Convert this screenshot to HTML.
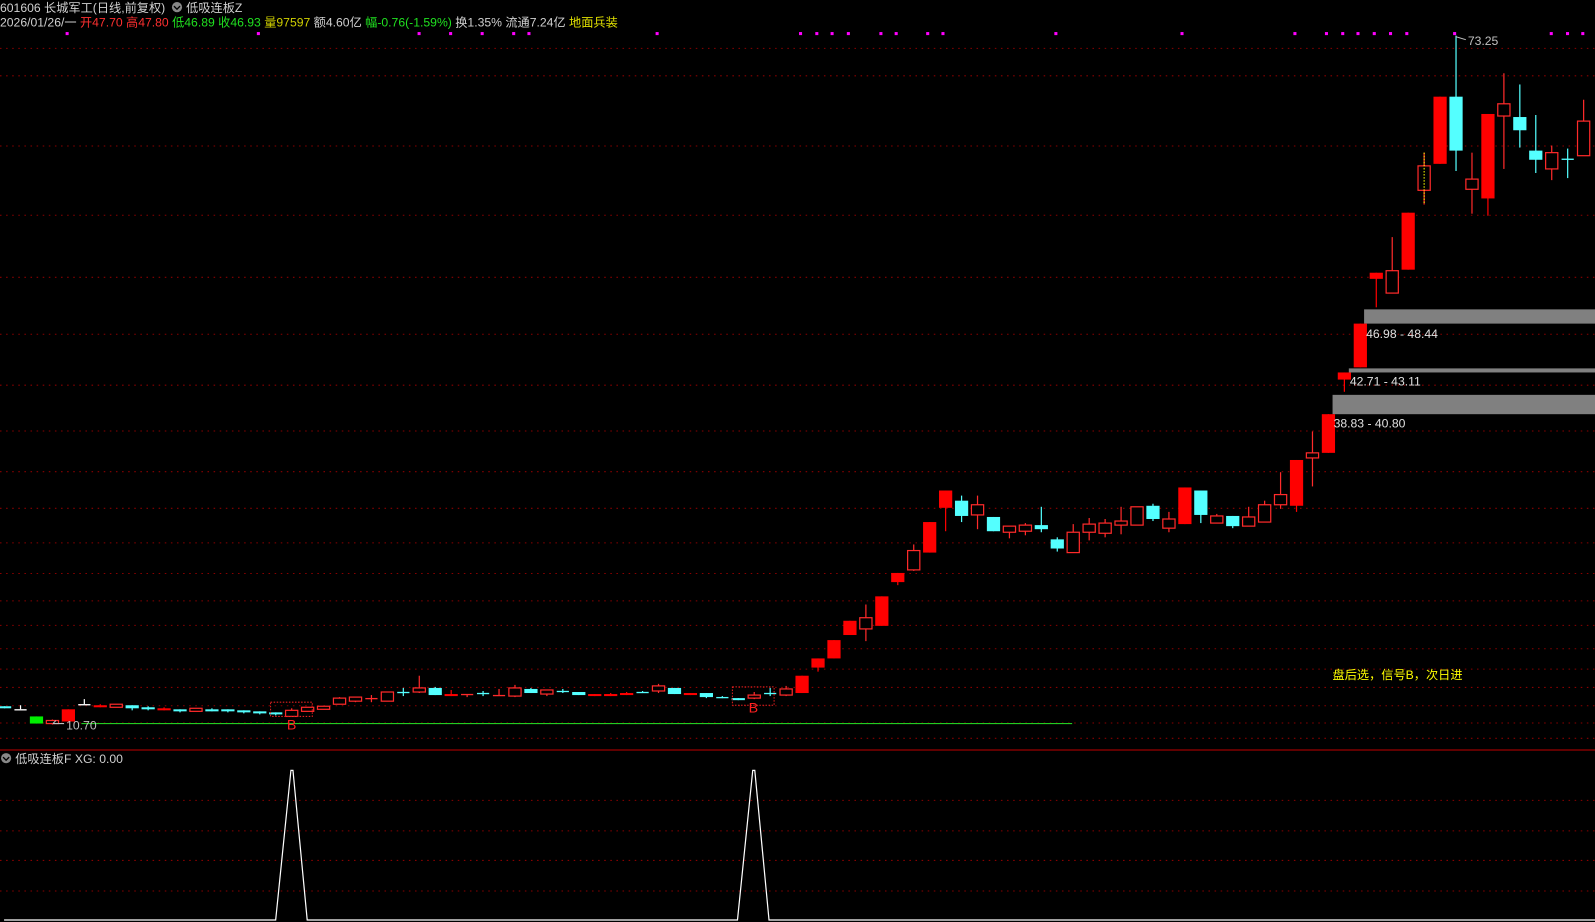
<!DOCTYPE html>
<html><head><meta charset="utf-8"><style>
html,body{margin:0;padding:0;background:#000;overflow:hidden}
svg{display:block}
text{font-family:"Liberation Sans","Noto Sans CJK SC",sans-serif}
</style></head><body>
<svg id="s" width="1595" height="922" viewBox="0 0 1568 906" preserveAspectRatio="none" xmlns="http://www.w3.org/2000/svg">
<rect width="1568" height="906" fill="#000"/>
<g id="grid"></g>
<g id="dots"></g>
<!-- gray bands -->
<rect x="1341" y="304" width="227" height="14" fill="#808080"/>
<rect x="1326" y="362" width="242" height="4" fill="#808080"/>
<rect x="1310" y="388" width="258" height="19" fill="#808080"/>
<line x1="80" y1="711" x2="1054" y2="711" stroke="#22cc22" stroke-width="1.2"/>
<g id="c"></g>
<rect x="266" y="690" width="41" height="14" fill="none" stroke="#e02020" stroke-dasharray="1.5,1.5"/>
<rect x="720" y="675" width="41" height="18" fill="none" stroke="#e02020" stroke-dasharray="1.5,1.5"/>
<text x="282" y="717" fill="#ff2020" font-size="14">B</text>
<text x="736" y="700" fill="#ff2020" font-size="14">B</text>
<text x="65" y="717" fill="#c0c0c0" font-size="12">10.70</text>
<path d="M52 711 h11 M52 711 l3 -3" stroke="#c0c0c0" fill="none"/>
<text x="1443" y="44" fill="#c0c0c0" font-size="12">73.25</text>
<path d="M1431 36 l10 3" stroke="#c0c0c0"/>
<text x="1343" y="332" fill="#e0e0e0" font-size="12">46.98 - 48.44</text>
<text x="1327" y="379" fill="#e0e0e0" font-size="12">42.71 - 43.11</text>
<text x="1311" y="420" fill="#e0e0e0" font-size="12">38.83 - 40.80</text>
<text x="1310" y="667" fill="#ffff00" font-size="12">盘后选，信号B，次日进</text>
<!-- header -->
<text x="0" y="12" fill="#d0d0d0" font-size="12">601606 长城军工(日线,前复权)</text>
<circle cx="174" cy="7" r="5" fill="#888"/><path d="M171 6 l3 3 l3 -3" stroke="#000" fill="none" stroke-width="1.3"/>
<text x="183" y="12" fill="#d0d0d0" font-size="12">低吸连板Z</text>
<text x="0" y="26" font-size="12"><tspan fill="#d0d0d0">2026/01/26/一 </tspan><tspan fill="#ff3030">开47.70 高47.80 </tspan><tspan fill="#20e020">低46.89 收46.93 </tspan><tspan fill="#d0d000">量97597 </tspan><tspan fill="#d0d0d0">额4.60亿 </tspan><tspan fill="#20e020">幅-0.76(-1.59%) </tspan><tspan fill="#d0d0d0">换1.35% 流通7.24亿 </tspan><tspan fill="#e0e000">地面兵装</tspan></text>
<!-- bottom panel -->
<line x1="0" y1="737" x2="1568" y2="737" stroke="#c00000" stroke-width="1"/>
<circle cx="6" cy="745" r="5" fill="#888"/><path d="M3 744 l3 3 l3 -3" stroke="#000" fill="none" stroke-width="1.3"/>
<text x="15" y="750" fill="#d0d0d0" font-size="12">低吸连板F  XG: 0.00</text>
<path d="M4 904 H271 L286 757 L288 757 L302 904 H725 L740 757 L742 757 L756 904 H1568" stroke="#fff" fill="none" stroke-width="1.2"/>
</svg>
<script>
var NS="http://www.w3.org/2000/svg";
function el(p,t,a){var e=document.createElementNS(NS,t);for(var k in a)e.setAttribute(k,a[k]);p.appendChild(e);return e;}
var g=document.getElementById('grid');
[47,74,143,211,272,328,378,423,463,499,533,563,590,614,637,657,675,693,710,725,786,816,845,875].forEach(function(y){
el(g,'line',{x1:0,x2:1568,y1:y+.5,y2:y+.5,stroke:'#8b0000','stroke-dasharray':'1.5,4.5'});});
var d=document.getElementById('dots');
[66,254,412,443,474,505,520,646,787,803,818,834,866,881,912,927,1038,1162,1273,1304,1320,1335,1351,1367,1383,1430,1525,1541,1556].forEach(function(x){
el(d,'rect',{x:x-1.5,y:31.5,width:3,height:3,fill:'#ff00ff'});});
// type, top, bottom, high, low
var C=[
['c',694,696,694,696],['w',697,697,693,697],['g',704,711,704,711],['r',708,711,707,712],['R',697,709,697,709],
['w',692,692,687,692],['R',693,695,692,695],['r',692,695,692,695],['c',693,696,693,698],['c',695,697,694,698],
['R',696,698,695,698],['c',697,699,697,700],['r',696,699,696,699],['c',697,699,696,699],['c',697,699,697,700],
['c',698,700,698,701],['c',699,701,699,702],['c',700,702,700,703],['r',698,704,696,704],['r',695,699,695,699],
['r',694,697,694,697],['r',686,692,685,692],['r',685,689,685,690],['rx',686,686,683,690],['r',680,689,680,689],
['cx',680,680,676,684],['r',676,680,664,681],['c',676,683,675,683],['R',682,684,678,684],['rx',682,682,682,685],
['cx',681,681,679,684],['rx',683,683,677,683],['r',676,684,673,685],['c',677,681,676,681],['r',678,682,678,684],
['cx',679,679,677,681],['c',680,683,680,683],['R',682,684,682,684],['R',682,684,681,684],['R',681,683,680,683],
['cx',680,680,679,681],['r',674,679,672,681],['c',676,682,676,682],['R',681,683,681,683],['c',681,685,681,686],
['cx',685,685,684,686],['c',686,687,686,688],['r',683,686,680,687],['cx',681,681,676,684],['r',677,683,674,684],
['R',664,681,664,681],['R',647,656,647,660],['R',629,647,629,647],['R',610,624,610,624],['r',607,618,594,630],
['R',586,615,586,615],['R',563,572,563,575],['r',541,560,535,561],['R',513,543,513,543],['R',482,499,482,522],
['c',492,507,487,513],['r',496,506,487,520],['c',508,522,508,522],['r',517,523,517,529],['r',516,522,514,526],
['c',516,520,498,523],['c',530,539,528,542],['r',523,543,515,543],['r',515,523,509,531],['r',514,524,510,528],
['r',512,516,498,525],['r',498,516,498,516],['c',497,510,495,512],['r',510,519,503,523],['R',479,515,479,515],
['c',482,506,482,514],['r',507,514,505,514],['c',507,517,507,519],['r',508,517,498,517],['r',496,513,492,513],
['r',486,496,464,500],['R',452,497,452,503],['r',445,450,424,478],['R',407,445,407,445],['R',366,373,366,385],
['R',318,361,318,361],['R',268,274,268,302],['r',266,288,233,288],['R',209,265,209,265],['ry',163,187,150,201],
['R',95,161,95,161],['c',95,148,35,168],['r',176,186,150,210],['R',112,195,112,212],['r',102,114,72,166],
['c',115,128,83,145],['c',148,157,113,170],['r',150,166,143,177],['cx',156,156,146,175],['r',119,153,98,153]
];
var cg=document.getElementById('c');
C.forEach(function(k,i){
var x=4.5+15.68*i,t=k[0],top=k[1],bot=k[2],hi=k[3],lo=k[4],w=12;
var col=(t[0]=='c')?'#54ffff':(t=='g')?'#00ee00':(t=='w')?'#ffffff':'#ff2a2a';
if(t=='R')col='#ff0000';
el(cg,'line',{x1:x,x2:x,y1:hi,y2:lo,stroke:col,'stroke-width':1.2});
if(t=='cx'||t=='rx'||t=='w'){el(cg,'line',{x1:x-6,x2:x+6,y1:top+.5,y2:top+.5,stroke:col,'stroke-width':1.3});return;}
var h=Math.max(bot-top,2);
if(t=='r'||t=='ry'){el(cg,'rect',{x:x-w/2,y:top,width:w,height:h,fill:'#000',stroke:col,'stroke-width':1.2});
 if(t=='ry')el(cg,'line',{x1:x,x2:x,y1:hi,y2:lo,stroke:'#ffff00','stroke-dasharray':'1.5,1.5'});}
else el(cg,'rect',{x:x-w/2-0.5,y:top,width:w+1,height:h,fill:col});
});
</script>
</body></html>
